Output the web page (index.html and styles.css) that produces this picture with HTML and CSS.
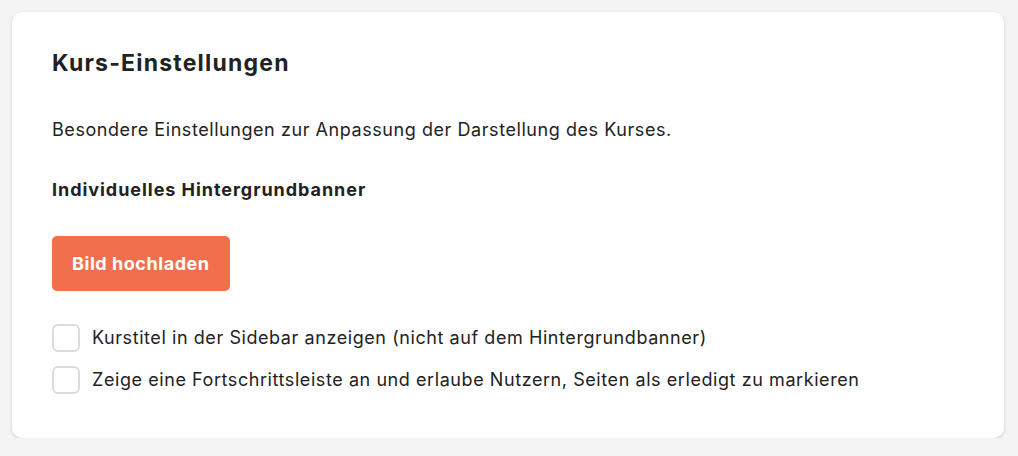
FILE: index.html
```html
<!DOCTYPE html>
<html lang="de">
<head>
<meta charset="utf-8">
<link rel="stylesheet" href="styles.css">
</head>
<body>
<div class="card">
  <h2 class="title">Kurs-Einstellungen</h2>
  <p class="desc">Besondere Einstellungen zur Anpassung der Darstellung des Kurses.</p>
  <h3 class="sub">Individuelles Hintergrundbanner</h3>
  <button class="btn">Bild hochladen</button>
  <div class="checks">
    <label class="check"><span class="box"></span><span>Kurstitel in der Sidebar anzeigen (nicht auf dem Hintergrundbanner)</span></label>
    <label class="check"><span class="box"></span><span>Zeige eine Fortschrittsleiste an und erlaube Nutzern, Seiten als erledigt zu markieren</span></label>
  </div>
</div>
</body>
</html>
```
FILE: styles.css
```css
html, body { margin: 0; padding: 0; }
body {
  background: #f4f4f4;
  font-family: Inter, "Noto Sans", sans-serif;
  color: #222;
  padding: 12px 14px 0 12px;
}
.card {
  background: #fff;
  border-radius: 10px;
  box-shadow: 0 1px 3px rgba(0,0,0,0.18);
  padding: 36px 40px 40px 40px;
  height: 426px;
  box-sizing: border-box;
}
.title {
  margin: 0;
  font-size: 23px;
  font-weight: 700;
  line-height: 30px;
  letter-spacing: 1.2px;
  color: #222;
}
.desc {
  margin: 40px 0 0;
  font-size: 18px;
  line-height: 24px;
  letter-spacing: 0.56px;
}
.sub {
  margin: 36px 0 0;
  font-size: 18px;
  font-weight: 700;
  line-height: 24px;
  letter-spacing: 0.95px;
}
.btn {
  margin-top: 34px;
  background: #f0704d;
  color: #fff;
  border: none;
  border-radius: 5px;
  height: 55px;
  padding: 0 20px;
  font-family: inherit;
  font-size: 18px;
  font-weight: 700;
  letter-spacing: 0.55px;
}
.checks {
  margin-top: 33px;
  display: flex;
  flex-direction: column;
  gap: 14px;
}
.check {
  display: flex;
  align-items: center;
  gap: 12px;
  font-size: 18px;
  line-height: 28px;
  letter-spacing: 0.57px;
}
.box {
  width: 28px;
  height: 28px;
  box-sizing: border-box;
  border: 2px solid #dcdcdc;
  border-radius: 6px;
  flex: none;
}
```
